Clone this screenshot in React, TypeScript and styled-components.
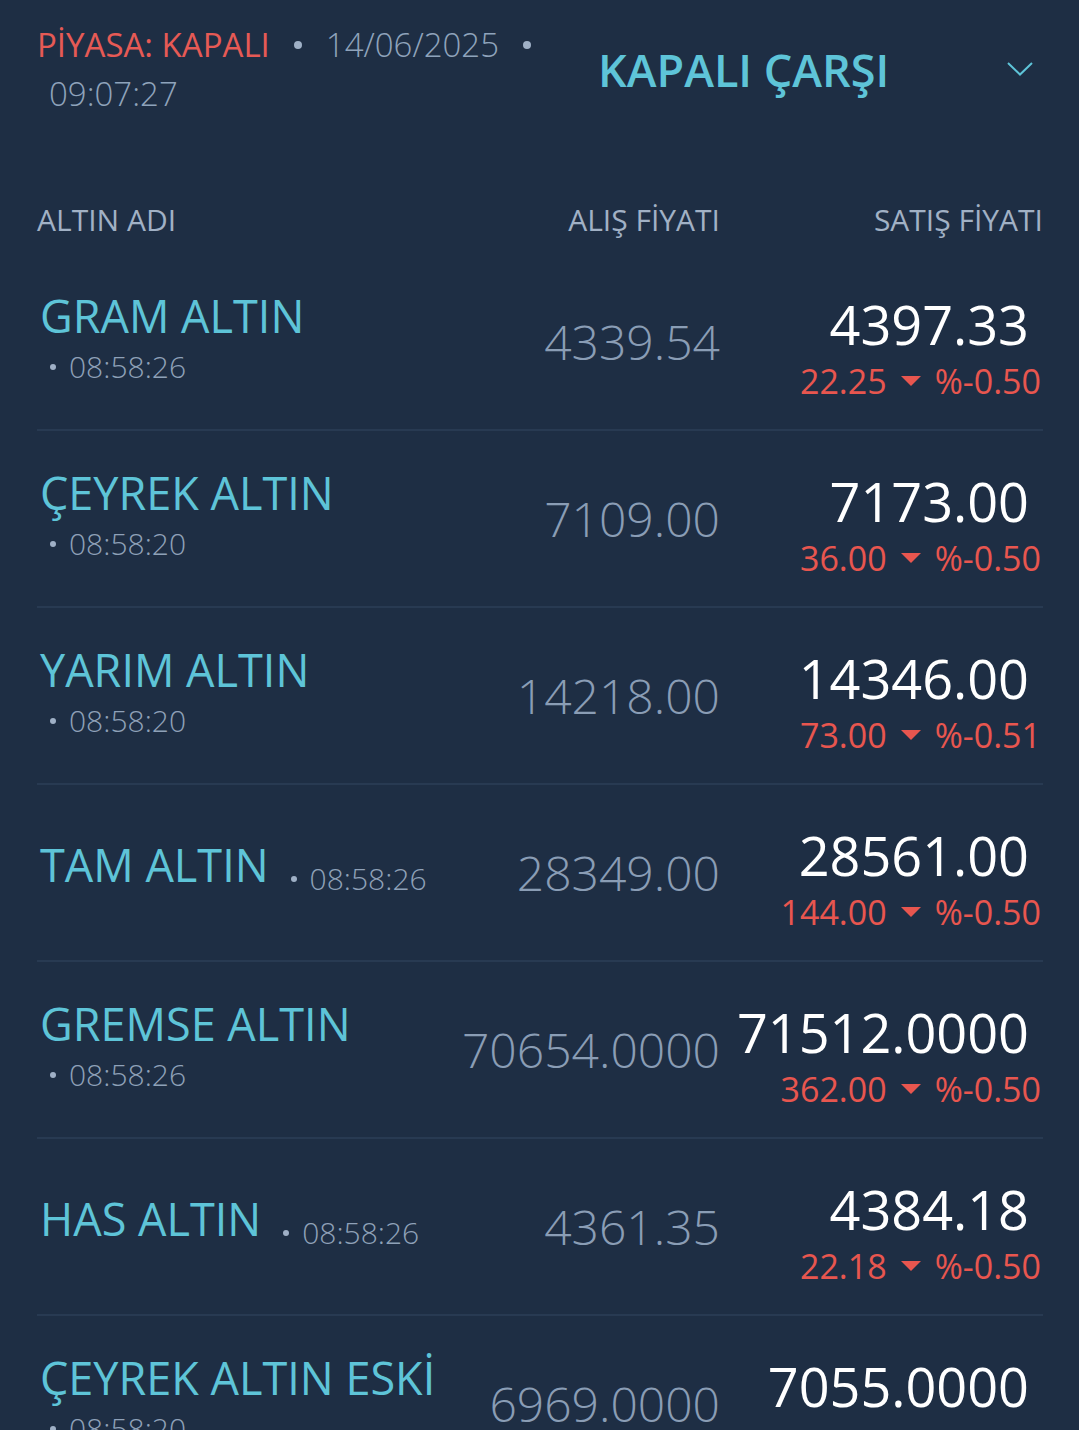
import React from "react";
import styled, { createGlobalStyle } from "styled-components";

interface GoldRow {
  name: string;
  time: string;
  buy: string;
  sell: string;
  change: string;
  percent: string;
}

const rows: GoldRow[] = [
  { name: "GRAM ALTIN", time: "08:58:26", buy: "4339.54", sell: "4397.33", change: "22.25", percent: "%-0.50" },
  { name: "ÇEYREK ALTIN", time: "08:58:20", buy: "7109.00", sell: "7173.00", change: "36.00", percent: "%-0.50" },
  { name: "YARIM ALTIN", time: "08:58:20", buy: "14218.00", sell: "14346.00", change: "73.00", percent: "%-0.51" },
  { name: "TAM ALTIN", time: "08:58:26", buy: "28349.00", sell: "28561.00", change: "144.00", percent: "%-0.50" },
  { name: "GREMSE ALTIN", time: "08:58:26", buy: "70654.0000", sell: "71512.0000", change: "362.00", percent: "%-0.50" },
  { name: "HAS ALTIN", time: "08:58:26", buy: "4361.35", sell: "4384.18", change: "22.18", percent: "%-0.50" },
  { name: "ÇEYREK ALTIN ESKİ", time: "08:58:20", buy: "6969.0000", sell: "7055.0000", change: "86.00", percent: "%-0.50" },
];

const GlobalStyle = createGlobalStyle`
  body {
    margin: 0;
    background: #1e2e44;
    font-family: "Open Sans", "Noto Sans", sans-serif;
  }
`;

export default function App() {
  return (
    <>
      <GlobalStyle />
      <Page>
        <Header>
          <StatusBlock>
            <Status>PİYASA: KAPALI</Status>
            <HeaderDot />
            <HeaderText>14/06/2025</HeaderText>
            <HeaderDot />
            <HeaderTime>09:07:27</HeaderTime>
          </StatusBlock>
          <MarketTitle>KAPALI ÇARŞI</MarketTitle>
          <Chevron width="26" height="14" viewBox="0 0 26 14">
            <path d="M1 1 L13 12.5 L25 1" fill="none" stroke="#5ec4d8" strokeWidth="2" />
          </Chevron>
        </Header>

        <ColumnHeader>
          <HeadLabel>ALTIN ADI</HeadLabel>
          <HeadLabel $right>ALIŞ FİYATI</HeadLabel>
          <HeadLabel $right>SATIŞ FİYATI</HeadLabel>
        </ColumnHeader>

        {rows.map((row) => (
          <Row key={row.name}>
            <NameBlock>
              <Name>{row.name}</Name>
              <UpdateTime>
                <SmallDot />
                {row.time}
              </UpdateTime>
            </NameBlock>
            <BuyPrice>{row.buy}</BuyPrice>
            <SellBlock>
              <SellPrice>{row.sell}</SellPrice>
              <Change>
                <span>{row.change}</span>
                <svg width="20" height="10" viewBox="0 0 20 10">
                  <path d="M0 0 H20 L10 10 Z" fill="#e8564f" />
                </svg>
                <span>{row.percent}</span>
              </Change>
            </SellBlock>
          </Row>
        ))}
      </Page>
    </>
  );
}

const Page = styled.div`
  padding: 20px 36px 0 37px;
`;

const Header = styled.header`
  display: flex;
  align-items: center;
`;

const StatusBlock = styled.div`
  width: 530px;
  flex: none;
  display: flex;
  flex-wrap: wrap;
  align-items: center;
  font-size: 33px;
  line-height: 49px;
`;

const Status = styled.span`
  color: #e65a55;
  font-weight: 400;
`;

const HeaderText = styled.span`
  color: #8fa3bb;
  font-weight: 300;
`;

const HeaderTime = styled(HeaderText)`
  margin-left: 12px;
`;

const HeaderDot = styled.span`
  width: 8px;
  height: 8px;
  border-radius: 50%;
  background: #9fb0c6;
  margin: 0 24px;
`;

const MarketTitle = styled.h1`
  margin: 0 0 0 31px;
  color: #5ec4d8;
  font-size: 45px;
  font-weight: 600;
  line-height: 1;
`;

const Chevron = styled.svg`
  margin-left: auto;
  margin-right: 10px;
`;

const ColumnHeader = styled.div`
  display: grid;
  grid-template-columns: 1fr 260px 323px;
  align-items: center;
  height: 75px;
  padding-top: 5px;
  margin-top: 61px;
  box-sizing: border-box;
`;

const HeadLabel = styled.div<{ $right?: boolean }>`
  color: #a1b1c5;
  font-size: 30px;
  font-weight: 400;
  text-align: ${(p) => (p.$right ? "right" : "left")};
`;

const Row = styled.div`
  display: grid;
  grid-template-columns: 1fr 260px 323px;
  align-items: center;
  height: 177px;
  box-sizing: border-box;
  border-bottom: 2px solid #283a52;
`;

const NameBlock = styled.div`
  display: flex;
  flex-wrap: wrap;
  align-items: baseline;
  column-gap: 12px;
  max-width: 402px;
  padding-left: 3px;
  margin-top: -2px;
`;

const Name = styled.div`
  color: #5ec4d8;
  font-size: 45px;
  line-height: 52px;
  font-weight: 400;
`;

const UpdateTime = styled.div`
  display: flex;
  align-items: center;
  margin-left: 10px;
  color: #8fa1b8;
  font-size: 30px;
  font-weight: 300;
  line-height: 50px;
`;

const SmallDot = styled.span`
  width: 6px;
  height: 6px;
  border-radius: 50%;
  background: #9fb0c6;
  margin-right: 13px;
`;

const BuyPrice = styled.div`
  text-align: right;
  color: #8a9db5;
  font-size: 48px;
  font-weight: 300;
  line-height: 1;
  white-space: nowrap;
`;

const SellBlock = styled.div`
  display: flex;
  flex-direction: column;
  align-items: flex-end;
  margin-top: 4px;
`;

const SellPrice = styled.div`
  color: #ffffff;
  font-size: 54px;
  font-weight: 400;
  line-height: 70px;
  padding-right: 14px;
  white-space: nowrap;
`;

const Change = styled.div`
  display: flex;
  align-items: center;
  gap: 14px;
  margin-top: 4px;
  color: #e8564f;
  font-size: 34px;
  line-height: 36px;
  padding-right: 2px;
`;
